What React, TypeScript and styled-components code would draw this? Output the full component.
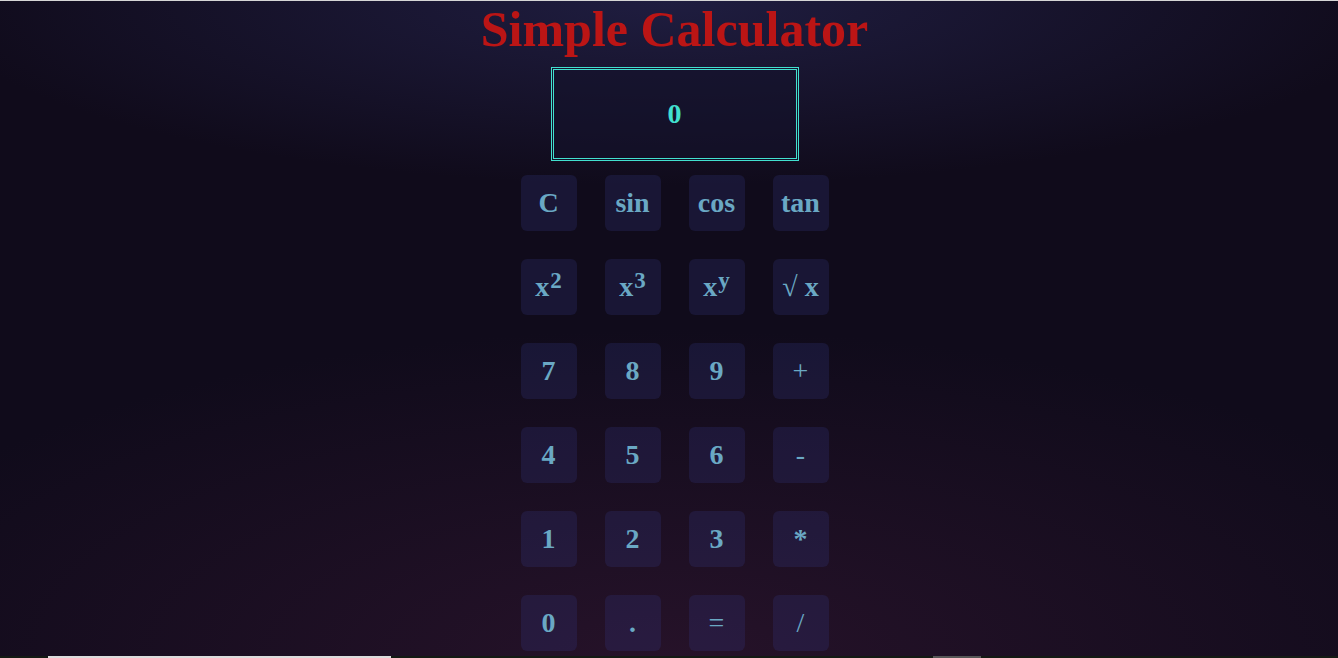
import React from "react";
import styled, { createGlobalStyle } from "styled-components";

const Global = createGlobalStyle`
  html, body { margin: 0; padding: 0; }
  body {
    background-color: #100b1b;
    overflow: hidden;
  }
`;

const Page = styled.div`
  min-height: 658px;
  box-sizing: border-box;
  border-top: 1px solid #d6d6d6;
  padding-left: 11px;
  display: flex;
  flex-direction: column;
  align-items: center;
  font-family: "Liberation Serif", "Times New Roman", serif;
  background:
    radial-gradient(ellipse 55% 28% at 50% 0%, #1f1d40 0%, rgba(31, 29, 64, 0) 100%),
    radial-gradient(ellipse 65% 50% at 50% 100%, #261229 0%, rgba(38, 18, 41, 0) 100%),
    #100b1b;
`;

const Title = styled.h1`
  margin: 0;
  font-size: 50px;
  line-height: 56px;
  font-weight: 700;
  color: #bb1515;
`;

const Display = styled.div`
  margin-top: 10px;
  width: 248px;
  height: 94px;
  box-sizing: border-box;
  border: 3px double #42e0cf;
  background: rgba(20, 18, 44, 0.55);
  display: flex;
  align-items: center;
  justify-content: center;
  color: #42e0cf;
  font-size: 28px;
  font-weight: 700;
`;

const Keys = styled.div`
  margin-top: 14px;
  display: grid;
  grid-template-columns: repeat(4, 56px);
  grid-auto-rows: 56px;
  gap: 28px;
`;

const Key = styled.button<{ $light?: boolean }>`
  border: none;
  padding: 0;
  border-radius: 6px;
  background: rgba(50, 56, 132, 0.25);
  color: #6aa8c4;
  font-family: "Liberation Serif", "Times New Roman", serif;
  font-size: 28px;
  font-weight: ${(p) => (p.$light ? 400 : 700)};
  display: flex;
  align-items: center;
  justify-content: center;
  cursor: pointer;

  sup {
    font-size: 23px;
    font-weight: 700;
    line-height: 0;
    position: relative;
    top: -6px;
    margin-left: 1px;
  }
`;

const ProgressStrip = styled.div`
  position: fixed;
  left: 0;
  right: 0;
  bottom: 0;
  height: 2px;
  background: #141a14;
`;

const ProgressSeg = styled.div<{ $left: number; $width: number; $color: string }>`
  position: absolute;
  top: 0;
  bottom: 0;
  left: ${(p) => p.$left}px;
  width: ${(p) => p.$width}px;
  background: ${(p) => p.$color};
`;

type K = { label: React.ReactNode; light?: boolean };

const keys: K[] = [
  { label: "C" },
  { label: "sin" },
  { label: "cos" },
  { label: "tan" },
  { label: <>x<sup>2</sup></> },
  { label: <>x<sup>3</sup></> },
  { label: <>x<sup>y</sup></> },
  { label: <>√&nbsp;x</> },
  { label: "7" },
  { label: "8" },
  { label: "9" },
  { label: "+", light: true },
  { label: "4" },
  { label: "5" },
  { label: "6" },
  { label: "-", light: true },
  { label: "1" },
  { label: "2" },
  { label: "3" },
  { label: "*" },
  { label: "0" },
  { label: "." },
  { label: "=", light: true },
  { label: "/", light: true },
];

export default function App() {
  return (
    <>
      <Global />
      <Page>
        <Title>Simple Calculator</Title>
        <Display>0</Display>
        <Keys>
          {keys.map((k, i) => (
            <Key key={i} $light={k.light}>
              {k.label}
            </Key>
          ))}
        </Keys>
      </Page>
      <ProgressStrip>
        <ProgressSeg $left={48} $width={343} $color="#dcdcdc" />
        <ProgressSeg $left={933} $width={48} $color="#575757" />
      </ProgressStrip>
    </>
  );
}
